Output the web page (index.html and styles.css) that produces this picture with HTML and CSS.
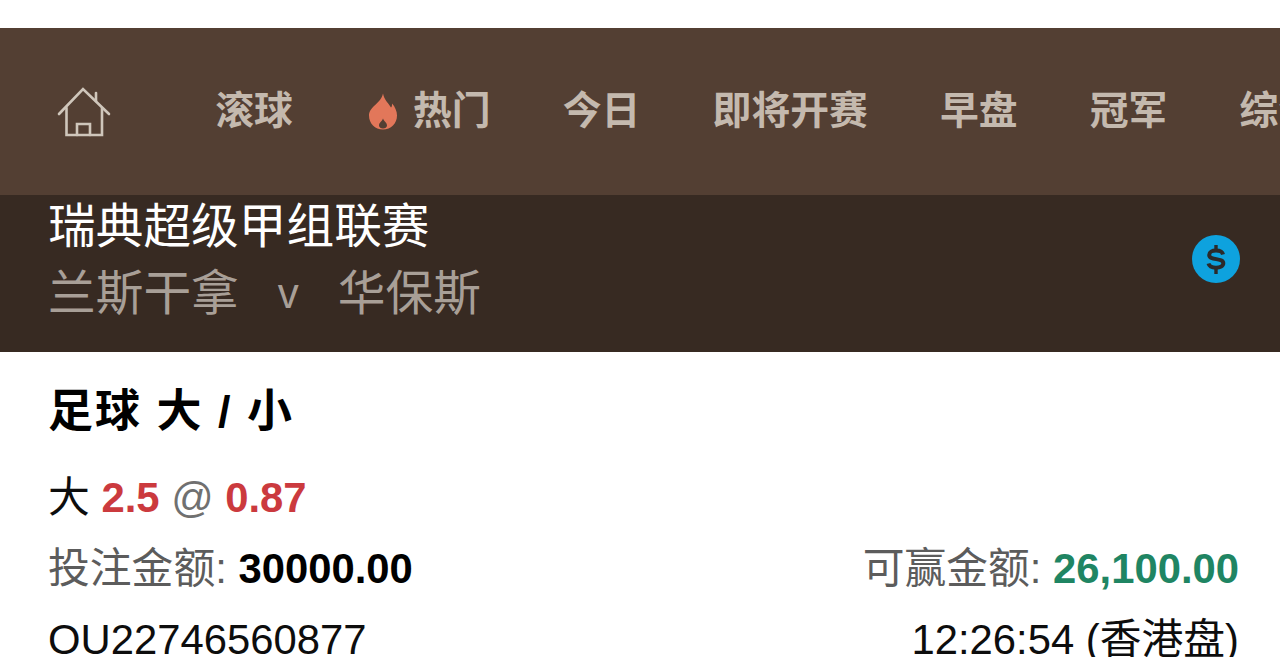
FILE: index.html
```html
<!DOCTYPE html>
<html lang="zh-CN">
<head>
    <meta charset="UTF-8">
    <title>注单</title>
    <link rel="stylesheet" href="styles.css">
</head>
<body>
    <nav class="nav">
        <a class="nav-home">
            <svg width="54" height="50" viewBox="0 0 54 50" fill="none" stroke="#cfc6bb" stroke-width="2.6" stroke-linejoin="miter" stroke-linecap="round">
                <path d="M2 27 L26 2 L52 27"/>
                <path d="M39 14 V6"/>
                <path d="M9.500 21 V48 H45 V21"/>
                <path d="M20 48 V37 H33 V48"/>
            </svg>
        </a>
        <a class="nav-item">滚球</a>
        <a class="nav-item nav-hot">
            <svg class="flame" width="30" height="37" viewBox="0 0 30 36">
                <path fill="#e2775a" fill-rule="evenodd" d="M15 0c1 6 5 9 8 14 1-1 1-2 1-4 3 3 5 8 5 12 0 8-6 14-14 14S1 30 1 22C1 13 13 10 15 0zm0 25c-1 3-4 4-4 7 0 2 2 3 4 3s4-1 4-3c0-3-3-4-4-7z"/>
            </svg>
            热门
        </a>
        <a class="nav-item">今日</a>
        <a class="nav-item">即将开赛</a>
        <a class="nav-item">早盘</a>
        <a class="nav-item">冠军</a>
        <a class="nav-item">综合过关</a>
    </nav>

    <header class="match">
        <div class="match-text">
            <div class="league">瑞典超级甲组联赛</div>
            <div class="teams"><span>兰斯干拿</span><span class="vs">v</span><span>华保斯</span></div>
        </div>
        <svg class="coin" width="48" height="48" viewBox="0 0 48 48">
            <circle cx="24" cy="24" r="24" fill="#0ea2de"/>
            <path d="M31 19.500c-.5-2.600-3.300-4-7-4-3.900 0-6.800 1.700-6.800 4.400 0 5.900 14.100 2.600 14.100 8.400 0 2.800-3.200 4.400-7.300 4.400-3.800 0-6.800-1.500-7.500-4.200" fill="none" stroke="#2b2a2a" stroke-width="4"/>
            <path d="M24 10v5M24 33v6" fill="none" stroke="#2b2a2a" stroke-width="3.400"/>
        </svg>
    </header>

    <section class="bet">
        <h2 class="bet-title">足球 大 / 小</h2>
        <div class="row">
            <div class="pick">大 <b class="red">2.5</b> <span class="at">@</span> <b class="red">0.87</b></div>
        </div>
        <div class="row">
            <div class="muted">投注金额: <b class="dark">30000.00</b></div>
            <div class="muted">可赢金额: <b class="green">26,100.00</b></div>
        </div>
        <div class="row">
            <div>OU22746560877</div>
            <div>12:26:54 (香港盘)</div>
        </div>
    </section>
</body>
</html>
```

FILE: styles.css
```css
html, body {
    margin: 0;
    height: 657px;
    overflow: hidden;
    background: #fff;
}
body {
    padding-top: 28px;
    box-sizing: border-box;
    font-family: "Liberation Sans", "Noto Sans CJK SC", sans-serif;
    color: #0d0d0d;
}
.nav {
    height: 167px;
    background: #533f33;
    display: flex;
    align-items: center;
    padding: 0 0 0 57px;
    box-sizing: border-box;
    gap: 72.200px;
    overflow: hidden;
    white-space: nowrap;
}
.nav-home {
    display: flex;
    margin-right: 32px;
}
.nav-item {
    display: flex;
    align-items: center;
    gap: 15px;
    font-size: 38.800px;
    font-weight: 700;
    line-height: 39px;
    color: #c4b9ae;
    flex-shrink: 0;
    padding-bottom: 2px;
}
.flame {
    margin: 1px 0 0 3px;
}
.match {
    height: 157px;
    background: #372a22;
    display: flex;
    align-items: flex-start;
    justify-content: space-between;
    padding: 2px 40px 0 48px;
    box-sizing: border-box;
}
.league {
    font-size: 47.700px;
    line-height: 60px;
    color: #fff;
}
.teams {
    font-size: 47.700px;
    line-height: 68px;
    margin-top: 3px;
    color: #a89f97;
    display: flex;
    gap: 39px;
}
.vs {
    font-size: 42px;
}
.coin {
    margin-top: 38px;
}
.bet {
    padding: 30px 41px 0 48px;
}
.bet-title {
    margin: 0 0 20px;
    font-size: 45px;
    line-height: 60px;
    font-weight: 700;
    color: #000;
    letter-spacing: 2px;
}
.row {
    display: flex;
    justify-content: space-between;
    font-size: 41.800px;
    line-height: 71px;
    white-space: nowrap;
}
.muted {
    color: #5c5c5c;
}
.at {
    color: #707070;
}
.red {
    color: #cb3a3e;
}
.dark {
    color: #000;
}
.green {
    color: #1f8563;
}
```
